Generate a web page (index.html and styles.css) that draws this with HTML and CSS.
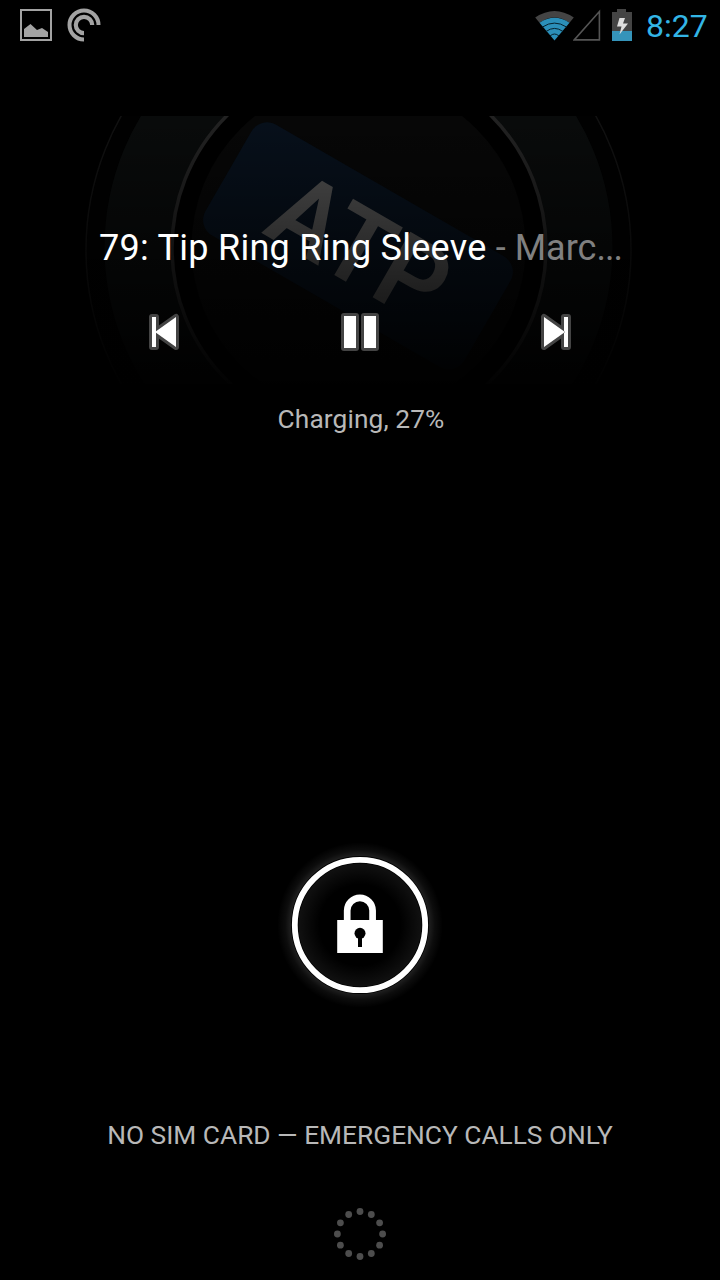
FILE: index.html
```html
<!DOCTYPE html>
<html lang="en">
<head>
<meta charset="utf-8">
<title>Lock screen</title>
<link rel="stylesheet" href="styles.css">
</head>
<body>
<main class="screen">
  <header class="status">
    <div class="notifications">
      <svg width="32" height="32" viewBox="0 0 32 32">
        <rect x="1" y="1" width="30" height="30" fill="none" stroke="#a3a3a3" stroke-width="2"/>
        <path d="M4 28V20L10.500 15L17 21L22 19L28 23V28z" fill="#a3a3a3"/>
      </svg>
      <svg width="34" height="34" viewBox="0 0 34 34">
        <g fill="none" stroke="#a3a3a3">
          <path d="M17 31.500A14.500 14.500 0 1 1 31.500 17" stroke-width="4"/>
          <path d="M17 25.200A8.200 8.200 0 1 1 25.200 17" stroke-width="4.200"/>
        </g>
      </svg>
    </div>
    <div class="system">
      <svg class="wifi" width="40" height="32" viewBox="0 0 40 32">
        <path d="M.2 8.500Q19.500-4.500 38.800 8.500L34.500 13.800Q19.500 3 4.500 13.800z" fill="#444"/>
        <path d="M4.500 13.800Q19.500 3.600 34.500 13.800L19.500 31.500z" fill="#2b8fb9"/>
        <path d="M7.500 18Q19.500 10.200 31.500 18M11 22.500Q19.500 16.300 28 22.500M15 27Q19.500 23 24 27" fill="none" stroke="#06202b" stroke-width="1"/>
      </svg>
      <svg class="signal" width="28" height="32" viewBox="0 0 28 32">
        <path d="M26.400 2.500V30.900H1.200z" fill="none" stroke="#545454" stroke-width="1.600"/>
      </svg>
      <svg class="battery" width="20" height="32" viewBox="0 0 20 32">
        <path d="M5 0h9v3h6v29H0V3h5z" fill="#444"/>
        <path d="M0 22h20v10H0z" fill="#3594ba"/>
        <path d="M7.500 9H13l-2 5.500h5L7.500 25.500 9.500 17.500H5z" fill="#dedede"/>
      </svg>
      <span class="clock">8:27</span>
    </div>
  </header>

  <section class="player">
    <svg class="artwork" viewBox="0 116 720 268" width="720" height="268">
      <defs>
        <linearGradient id="fade" x1="0" y1="0" x2="0" y2="1">
          <stop offset="0" stop-color="#000" stop-opacity="0"/>
          <stop offset="1" stop-color="#000" stop-opacity=".94"/>
        </linearGradient>
      </defs>
      <circle cx="358.500" cy="250" r="272.500" fill="#010101" stroke="#111" stroke-width="1.500"/>
      <circle cx="358.500" cy="247" r="254" fill="#090b0b"/>
      <circle cx="359" cy="248" r="187" fill="#000" stroke="#222" stroke-width="3.500"/>
      <circle cx="358.500" cy="247" r="167" fill="#070707"/>
      <g transform="rotate(30)">
        <rect x="283.500" y="-30" width="299" height="128" rx="18" fill="#07101b"/>
        <text class="cover-text" x="342" y="71" textLength="187" lengthAdjust="spacingAndGlyphs">ATP</text>
      </g>
      <rect x="0" y="116" width="720" height="268" fill="url(#fade)"/>
    </svg>
    <div class="playback">
      <h1 class="track">79: Tip Ring Ring Sleeve <span class="artist">- Marc<span class="ellipsis">...</span></span></h1>
      <div class="controls">
        <svg width="32" height="38" viewBox="0 0 32 38">
          <path d="M4 4h4v30H4z M7 19 28 4v30z" fill="#444" stroke="#444" stroke-width="6" stroke-linejoin="round"/>
          <path d="M4 4h4v30H4z M7 19 28 4v30z" fill="#fff"/>
        </svg>
        <svg width="40" height="40" viewBox="0 0 40 40">
          <g fill="#fff" stroke="#444" stroke-width="3"><rect x="2.500" y="2.500" width="15" height="35" rx="1.500"/><rect x="22.500" y="2.500" width="15" height="35" rx="1.500"/></g>
        </svg>
        <svg width="32" height="38" viewBox="0 0 32 38">
          <path d="M24 4h4v30h-4z M25 19 4 4v30z" fill="#444" stroke="#444" stroke-width="6" stroke-linejoin="round"/>
          <path d="M24 4h4v30h-4z M25 19 4 4v30z" fill="#fff"/>
        </svg>
      </div>
    </div>
  </section>

  <p class="charging">Charging, 27%</p>

  <div class="handle">
    <svg width="180" height="180" viewBox="0 0 180 180">
      <defs>
        <radialGradient id="halo">
          <stop offset="0" stop-color="#fff" stop-opacity="0"/>
          <stop offset=".45" stop-color="#fff" stop-opacity="0"/>
          <stop offset=".7" stop-color="#fff" stop-opacity=".07"/>
          <stop offset=".77" stop-color="#fff" stop-opacity=".12"/>
          <stop offset=".83" stop-color="#fff" stop-opacity=".05"/>
          <stop offset=".92" stop-color="#fff" stop-opacity="0"/>
        </radialGradient>
      </defs>
      <circle cx="90" cy="90" r="90" fill="url(#halo)"/>
      <circle cx="90" cy="90" r="65.200" fill="none" stroke="#000" stroke-width="7.500"/>
      <circle cx="90" cy="90" r="65.200" fill="none" stroke="#fff" stroke-width="5.800"/>
      <path d="M77.200 87V75.500a12.700 12.700 0 0 1 25.400 0V87" fill="none" stroke="#fff" stroke-width="6.700"/>
      <path d="M67.200 85h45.600v33H67.200z" fill="#fff"/>
      <circle cx="90" cy="98.300" r="5.500" fill="#000"/>
      <path d="M88 100h4v12h-4z" fill="#000"/>
    </svg>
  </div>

  <p class="carrier">NO SIM CARD — EMERGENCY CALLS ONLY</p>

  <svg class="dots" width="54" height="54" viewBox="-27 -27 54 54">
    <g fill="#4d4d4d">
      <circle cx="0" cy="-22.500" r="3.400"/><circle cx="11.300" cy="-19.500" r="3.400"/><circle cx="19.600" cy="-11.200" r="3.400"/>
      <circle cx="22.600" cy="0" r="3.400"/><circle cx="19.600" cy="11.200" r="3.400"/><circle cx="11.300" cy="19.500" r="3.400"/>
      <circle cx="0" cy="22.500" r="3.400"/><circle cx="-11.300" cy="19.500" r="3.400"/><circle cx="-19.600" cy="11.200" r="3.400"/>
      <circle cx="-22.600" cy="0" r="3.400"/><circle cx="-19.600" cy="-11.200" r="3.400"/><circle cx="-11.300" cy="-19.500" r="3.400"/>
    </g>
  </svg>
</main>
</body>
</html>
```
FILE: styles.css
```css
* { box-sizing: border-box; }
body { margin: 0; background: #000; font-family: Roboto, "Liberation Sans", sans-serif; }
svg { display: block; flex: none; }
p, h1 { margin: 0; font-weight: 400; white-space: nowrap; }
.screen { width: 720px; height: 1280px; display: flex; flex-direction: column; align-items: center; overflow: hidden; }
.status { width: 720px; height: 50px; display: flex; justify-content: space-between; padding: 0 12px 0 20px; }
.notifications { display: flex; gap: 15px; align-items: flex-start; padding-top: 9px; }
.notifications svg + svg { margin-top: -1px; }
.system { display: flex; align-items: flex-start; padding-top: 9px; }
.signal { margin-left: -2px; }
.battery { margin-left: 11px; }
.clock { width: 62px; margin-left: 14px; color: #33b5e5; font-size: 32px; line-height: 34px; white-space: nowrap; }
.player { width: 720px; height: 268px; margin-top: 66px; display: grid; }
.player > * { grid-area: 1 / 1; }
.cover-text { font-size: 106px; font-weight: 600; fill: #505050; }
.playback { z-index: 1; padding-top: 110px; }
.track { width: 524px; margin-left: 99px; font-size: 36px; line-height: 44px; letter-spacing: .27px; color: #fff; }
.artist { color: #808080; letter-spacing: 0; }
.ellipsis { letter-spacing: -.9px; }
.controls { display: flex; justify-content: space-between; align-items: center; width: 424px; margin: 42px auto 0; }
.charging { margin-top: 19px; padding-left: 2px; font-size: 26.3px; line-height: 32px; letter-spacing: .1px; color: #b8b8b8; }
.handle { margin-top: 400px; }
.carrier { margin-top: 104px; font-size: 26.3px; line-height: 32px; color: #b8b8b8; }
.dots { margin-top: 56px; }
```
